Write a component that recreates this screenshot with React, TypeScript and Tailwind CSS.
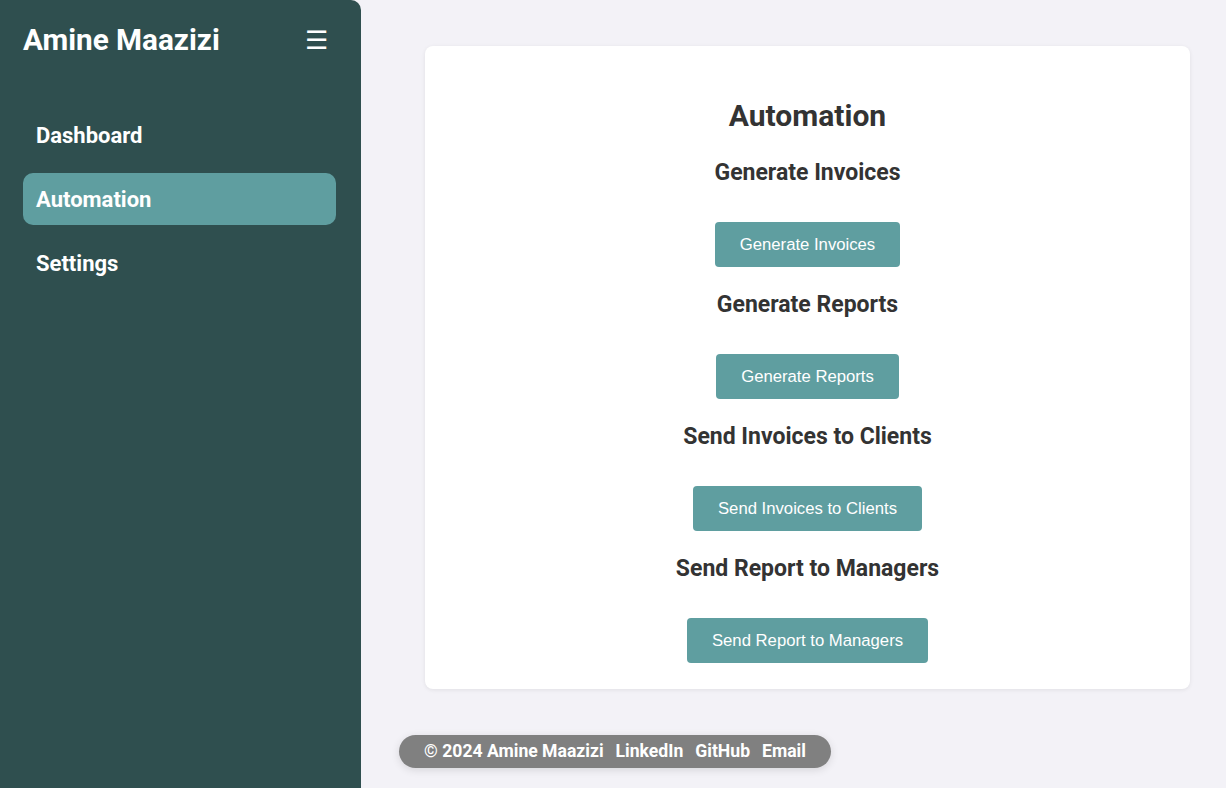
const actions = [
  'Generate Invoices',
  'Generate Reports',
  'Send Invoices to Clients',
  'Send Report to Managers',
]

const navItems = ['Dashboard', 'Automation', 'Settings']

function Sidebar() {
  return (
    <aside className="w-[361px] shrink-0 min-h-[788px] bg-[#2f4f4f] rounded-tr-[10px] pl-[23px] pr-[25px] pt-[22px] text-white">
      <div className="flex items-center justify-between h-[36px]">
        <h1 className="text-[29.7px] font-bold leading-[36px]">Amine Maazizi</h1>
        <span className="text-[26px] leading-none mr-[8px]">☰</span>
      </div>
      <nav className="mt-[51px] flex flex-col gap-[12px]">
        {navItems.map((item) => (
          <a
            key={item}
            className={
              item === 'Automation'
                ? 'h-[52px] flex items-center px-[13px] rounded-[10px] bg-[#5f9ea0] text-[22px] font-bold'
                : 'h-[52px] flex items-center px-[13px] rounded-[10px] text-[22px] font-bold'
            }
          >
            {item}
          </a>
        ))}
      </nav>
    </aside>
  )
}

export default function App() {
  return (
    <div className="flex min-h-[788px] bg-[#f3f2f7]" style={{ fontFamily: 'Roboto, "Liberation Sans", sans-serif' }}>
      <Sidebar />
      <main className="flex-1 flex flex-col pt-[46px] pl-[64px] pr-[36px]">
        <section className="bg-white rounded-[8px] shadow-[0_1px_4px_rgba(0,0,0,0.08)] flex flex-col items-center pt-[51px] pb-[26px] text-[#333]">
          <h2 className="text-[30px] font-bold leading-[38px]">Automation</h2>
          {actions.map((a) => (
            <div key={a} className="flex flex-col items-center">
              <h3 className="text-[23px] font-bold leading-[27px] mt-[24px] mb-[36px]">{a}</h3>
              <button className="h-[45px] px-[25px] rounded-[4px] bg-[#5f9ea0] text-white text-[16.7px] font-['Liberation_Sans',sans-serif]">
                {a}
              </button>
            </div>
          ))}
        </section>
        <footer className="mt-[46px] -ml-[26px] self-start h-[33px] rounded-full bg-[#808080] shadow-[0_2px_8px_rgba(0,0,0,0.12)] flex items-center gap-[12px] px-[25px] text-white text-[17.6px] font-bold">
          <span>© 2024 Amine Maazizi</span>
          <a>LinkedIn</a>
          <a>GitHub</a>
          <a>Email</a>
        </footer>
      </main>
    </div>
  )
}
